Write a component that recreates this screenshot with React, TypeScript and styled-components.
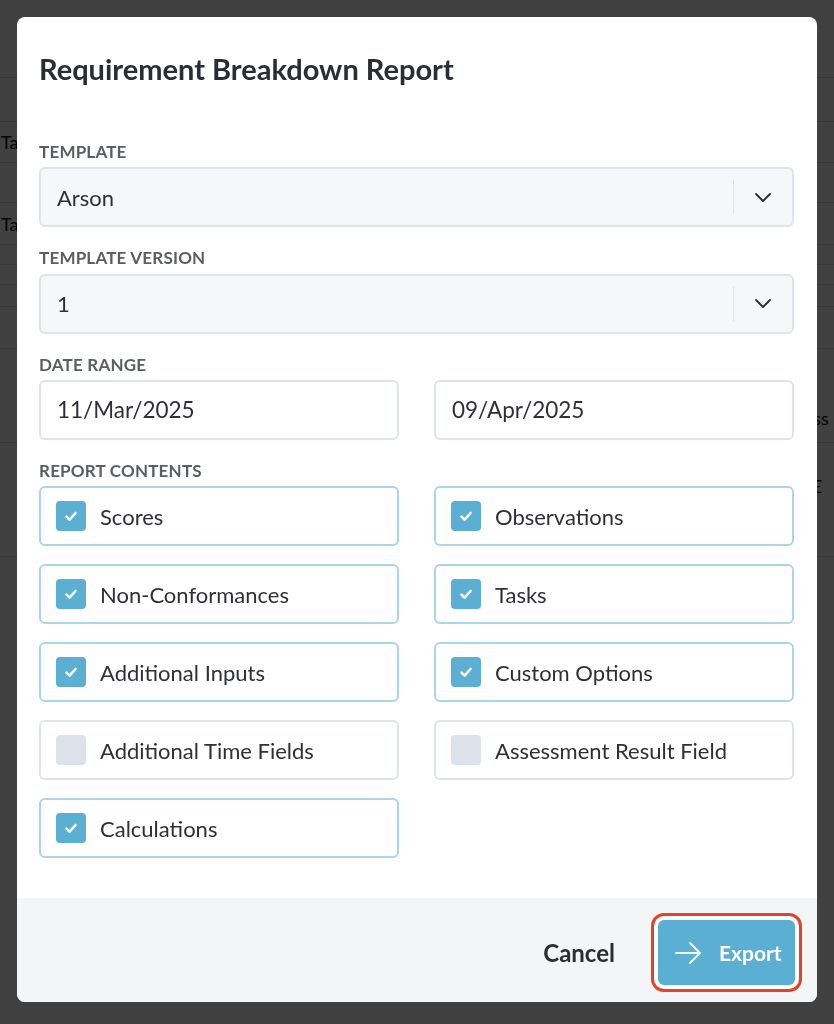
import { useState } from "react";
import styled, { createGlobalStyle } from "styled-components";

const GlobalStyle = createGlobalStyle`
  html, body {
    margin: 0;
    padding: 0;
    background: #ffffff;
  }
  body {
    font-family: Lato, "Open Sans", "Liberation Sans", sans-serif;
    color: #2a2d33;
  }
  * {
    box-sizing: border-box;
  }
`

// page behind the dialog, only partly visible at the edges
const BackPage = styled.div`
  height: 1024px;
  overflow: hidden;
  background: #ffffff;
`

const BackRow = styled.div<{ $h: number; $pt?: number; $pb?: number; $align?: string }>`
  height: ${p => p.$h}px;
  display: grid;
  grid-template-columns: 1fr 34px;
  align-items: ${p => p.$align ?? "center"};
  padding: ${p => p.$pt ?? 0}px 0 ${p => p.$pb ?? 0}px;
  border-bottom: 1px solid #dcdcdc;
  font-family: Lato, sans-serif;
  font-size: 18px;
  color: #111;
`

const BackCell = styled.div`
  padding-left: 1px;
  white-space: nowrap;
`

const Overlay = styled.div`
  position: fixed;
  inset: 0;
  background: rgba(0, 0, 0, 0.75);
  padding: 17px;
  display: flex;
  align-items: flex-start;
`

const Modal = styled.div`
  width: 800px;
  background: #ffffff;
  border-radius: 8px;
  overflow: hidden;
  display: flex;
  flex-direction: column;
`

const Body = styled.div`
  padding: 35px 23px 40px 22px;
`

const Title = styled.h2`
  margin: 0 0 55px;
  font-size: 29px;
  line-height: 1.2;
  font-weight: 700;
  color: #2a2d33;
`

const Field = styled.div`
  margin-bottom: 21px;
`

const Label = styled.div`
  font-size: 17px;
  line-height: 1.2;
  font-weight: 700;
  letter-spacing: 0.2px;
  color: #5a5e64;
  text-transform: uppercase;
  margin-bottom: 5px;
`

const SelectBox = styled.div`
  height: 60px;
  display: flex;
  align-items: center;
  background: #f5f7f9;
  border: 2px solid #dfe4eb;
  border-radius: 6px;
  padding-left: 16px;
`

const Value = styled.span`
  flex: 1;
  font-size: 22px;
  color: #2e3035;
`

const Indicator = styled.div`
  width: 59px;
  height: 34px;
  border-left: 1.5px solid #dce2ea;
  display: flex;
  align-items: center;
  justify-content: center;
`

const TwoCols = styled.div<{ $rowGap?: number }>`
  display: grid;
  grid-template-columns: 1fr 1fr;
  column-gap: 35px;
  row-gap: ${p => p.$rowGap ?? 0}px;
`

const DateInput = styled.div`
  height: 60px;
  display: flex;
  align-items: center;
  border: 2px solid #dfe4eb;
  border-radius: 6px;
  padding-left: 16px;
  font-size: 22.5px;
  color: #2e3035;
`

const CheckRow = styled.label<{ $on: boolean }>`
  height: 60px;
  display: flex;
  align-items: center;
  gap: 14px;
  padding-left: 15px;
  border: 2px solid ${p => (p.$on ? "#a9d5e8" : "#dfe4eb")};
  border-radius: 6px;
  font-size: 22px;
  color: #2e3035;
  cursor: pointer;
`

const Box = styled.span<{ $on: boolean }>`
  width: 30px;
  height: 30px;
  border-radius: 4px;
  background: ${p => (p.$on ? "#5aafd3" : "#dce2ea")};
  display: flex;
  align-items: center;
  justify-content: center;
`

const Footer = styled.div`
  height: 104px;
  background: #f4f5f7;
  display: flex;
  align-items: center;
  justify-content: flex-end;
  gap: 43px;
  padding: 5px 22px 0 0;
`

const CancelButton = styled.button`
  border: none;
  background: none;
  padding: 0;
  font-family: inherit;
  font-size: 24px;
  font-weight: 700;
  color: #2a2d33;
  cursor: pointer;
`

const ExportButton = styled.button`
  height: 65px;
  width: 137px;
  display: flex;
  align-items: center;
  gap: 18px;
  padding: 0 0 0 17px;
  border: none;
  border-radius: 6px;
  background: #5aafd3;
  color: #ffffff;
  font-family: inherit;
  font-size: 21px;
  font-weight: 700;
  cursor: pointer;
  box-shadow: 0 0 0 4px #ffffff, 0 0 0 7px #e4412b;
`

const Chevron = () => (
  <svg width="16" height="9" viewBox="0 0 16 9" fill="none">
    <path d="M1 1l7 7 7-7" stroke="#2a2d33" strokeWidth="1.8" strokeLinecap="round" strokeLinejoin="round"/>
  </svg>
)

const Tick = () => (
  <svg width="14" height="14" viewBox="0 0 14 14" fill="none">
    <path d="M2.5 7.6l3.1 3 5.9-6.6" stroke="#fff" strokeWidth="2.6" strokeLinecap="round" strokeLinejoin="round"/>
  </svg>
)

const Arrow = () => (
  <svg width="26" height="22" viewBox="0 0 26 22" fill="none">
    <path d="M1 11h24M15 1l10 10-10 10" stroke="#fff" strokeWidth="1.8" strokeLinecap="round" strokeLinejoin="round"/>
  </svg>
)

const initialOptions = [
  { name: "Scores", on: true },
  { name: "Observations", on: true },
  { name: "Non-Conformances", on: true },
  { name: "Tasks", on: true },
  { name: "Additional Inputs", on: true },
  { name: "Custom Options", on: true },
  { name: "Additional Time Fields", on: false },
  { name: "Assessment Result Field", on: false },
  { name: "Calculations", on: true },
]

type BackRowData = { h: number; left?: string; right?: string; pt?: number; pb?: number; align?: string }

const backRows: BackRowData[] = [
  { h: 78 }, { h: 44 }, { h: 41, left: "Task", right: "⌄" }, { h: 40 }, { h: 42, left: "Task" },
  { h: 20 }, { h: 20 }, { h: 22 }, { h: 42 },
  { h: 94, right: "Ass", align: "end", pb: 13 },
  { h: 114, right: "TE", align: "start", pt: 32 },
]

const App = () => {
  const [options, setOptions] = useState(initialOptions)

  const toggle = (index: number) => {
    setOptions(options.map((o, i) => (i === index ? { ...o, on: !o.on } : o)))
  }

  return (
    <>
      <GlobalStyle/>
      <BackPage>
        {backRows.map((row, i) => (
          <BackRow key={i} $h={row.h} $pt={row.pt} $pb={row.pb} $align={row.align}>
            <BackCell>{row.left}</BackCell>
            <BackCell>{row.right}</BackCell>
          </BackRow>
        ))}
      </BackPage>
      <Overlay>
        <Modal>
          <Body>
            <Title>Requirement Breakdown Report</Title>
            <Field>
              <Label>Template</Label>
              <SelectBox>
                <Value>Arson</Value>
                <Indicator><Chevron/></Indicator>
              </SelectBox>
            </Field>
            <Field>
              <Label>Template Version</Label>
              <SelectBox>
                <Value>1</Value>
                <Indicator><Chevron/></Indicator>
              </SelectBox>
            </Field>
            <Field>
              <Label>Date Range</Label>
              <TwoCols>
                <DateInput>11/Mar/2025</DateInput>
                <DateInput>09/Apr/2025</DateInput>
              </TwoCols>
            </Field>
            <Label>Report Contents</Label>
            <TwoCols $rowGap={18}>
              {options.map((option, index) => (
                <CheckRow key={option.name} $on={option.on} onClick={() => toggle(index)}>
                  <Box $on={option.on}>{option.on && <Tick/>}</Box>
                  {option.name}
                </CheckRow>
              ))}
            </TwoCols>
          </Body>
          <Footer>
            <CancelButton>Cancel</CancelButton>
            <ExportButton><Arrow/>Export</ExportButton>
          </Footer>
        </Modal>
      </Overlay>
    </>
  )
}

export default App
